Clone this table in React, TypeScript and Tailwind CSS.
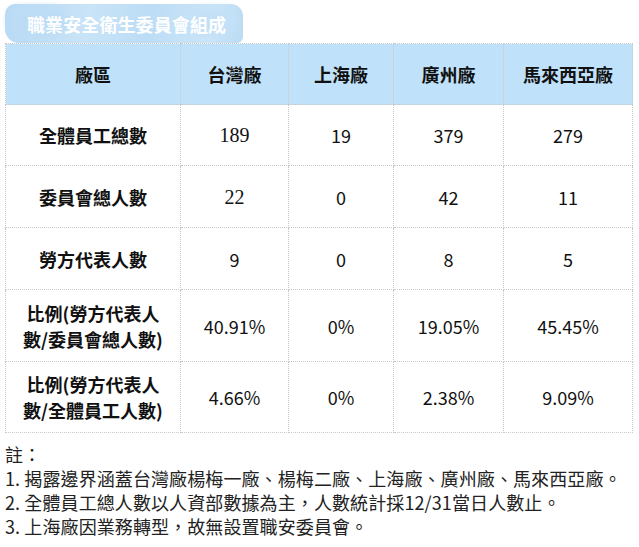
import React from "react";

const CJK = '"Noto Sans CJK TC", "Noto Sans", sans-serif';
const SERIF = '"Liberation Serif", "Noto Sans CJK TC", serif';

type Cell = { v: string; serif?: boolean };

const rows: { label: React.ReactNode; h: string; cells: Cell[] }[] = [
  { label: "全體員工總數", h: "h-[61px]", cells: [{ v: "189", serif: true }, { v: "19" }, { v: "379" }, { v: "279" }] },
  { label: "委員會總人數", h: "h-[62px]", cells: [{ v: "22", serif: true }, { v: "0" }, { v: "42" }, { v: "11" }] },
  { label: "勞方代表人數", h: "h-[62px]", cells: [{ v: "9" }, { v: "0" }, { v: "8" }, { v: "5" }] },
  {
    label: (
      <>
        比例(勞方代表人
        <br />
        數/委員會總人數)
      </>
    ),
    h: "h-[72px]",
    cells: [{ v: "40.91%" }, { v: "0%" }, { v: "19.05%" }, { v: "45.45%" }],
  },
  {
    label: (
      <>
        比例(勞方代表人
        <br />
        數/全體員工人數)
      </>
    ),
    h: "h-[71px]",
    cells: [{ v: "4.66%" }, { v: "0%" }, { v: "2.38%" }, { v: "9.09%" }],
  },
];

const bd = "border border-dotted border-[#c8c8c8]";

export default function App() {
  return (
    <div className="w-[639px] h-[547px] bg-white pl-[5px] pr-[7px]" style={{ fontFamily: CJK }}>
      <div className="h-[43px] pt-[4px] flex items-end">
        <div className="relative w-[238px] h-[39px]">
          <div className="absolute inset-0 rounded-[10px_12px_6px_14px] bg-[linear-gradient(100deg,#b4d8f4_0%,#c6e2f7_35%,#b8dbf5_60%,#c9e4f8_85%,#b7daf4_100%)] opacity-95" />
          <div className="absolute left-[2px] top-[2px] w-[60px] h-[30px] rounded-full bg-[#bcdcf5] blur-[3px]" />
          <div className="absolute right-[6px] top-[4px] w-[50px] h-[28px] rounded-full bg-[#c3e0f7] blur-[4px]" />
          <div className="relative h-full flex items-center pl-[22px] text-white font-bold text-[18px] leading-none tracking-[0.1px]">
            職業安全衛生委員會組成
          </div>
        </div>
      </div>
      <table className="border-collapse w-[627px] table-fixed text-[18px] text-[#111]">
        <colgroup>
          <col className="w-[175px]" />
          <col className="w-[108px]" />
          <col className="w-[105px]" />
          <col className="w-[110px]" />
          <col className="w-[129px]" />
        </colgroup>
        <thead>
          <tr className="h-[61px] bg-[#bfe1f9]">
            {["廠區", "台灣廠", "上海廠", "廣州廠", "馬來西亞廠"].map((t) => (
              <th key={t} className={`${bd} font-bold text-center leading-[24px] p-0`}>
                {t}
              </th>
            ))}
          </tr>
        </thead>
        <tbody>
          {rows.map((r, i) => (
            <tr key={i} className={r.h}>
              <td className={`${bd} font-bold text-center leading-[26px] p-0`}>{r.label}</td>
              {r.cells.map((c, j) => (
                <td
                  key={j}
                  className={`${bd} text-center p-0 leading-[24px]`}
                  style={c.serif ? { fontFamily: SERIF, fontSize: "20px" } : undefined}
                >
                  {c.v}
                </td>
              ))}
            </tr>
          ))}
        </tbody>
      </table>
      <div className="pt-[9px] text-[18px] leading-[24px] text-[#222] tracking-[0.1px]">
        <div>註：</div>
        <div>1. 揭露邊界涵蓋台灣廠楊梅一廠、楊梅二廠、上海廠、廣州廠、馬來西亞廠。</div>
        <div>2. 全體員工總人數以人資部數據為主，人數統計採12/31當日人數止。</div>
        <div>3. 上海廠因業務轉型，故無設置職安委員會。</div>
      </div>
    </div>
  );
}
